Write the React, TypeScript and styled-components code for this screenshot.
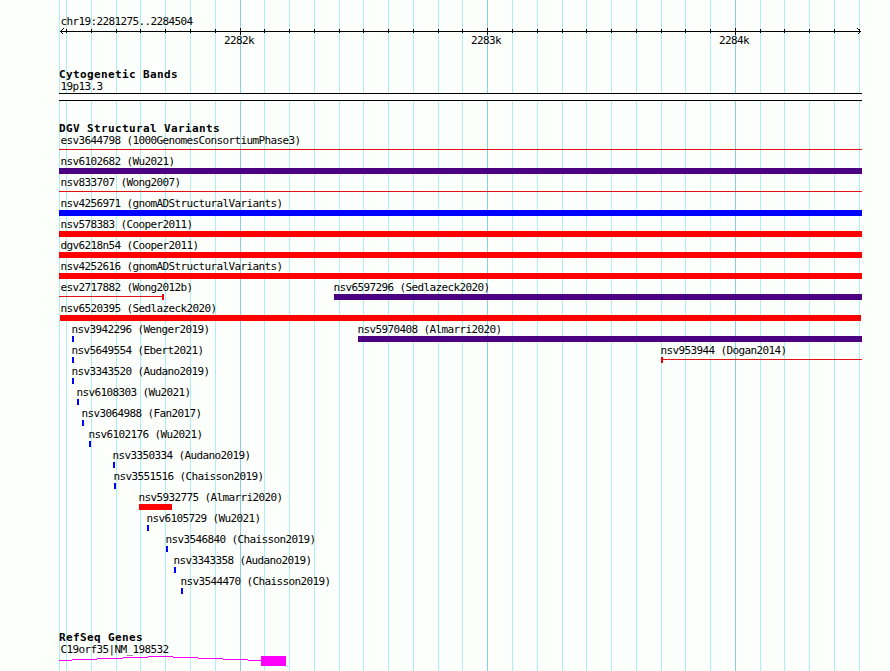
import React from 'react';
import styled, { createGlobalStyle } from 'styled-components';

const GlobalStyle = createGlobalStyle`
  body {
    margin: 0;
    background: #fdfffc;
  }
`;

// left edge of the drawn region, every position below is counted from it
const LEFT = 59;
const WIDTH = 803;

const MAJOR = [240, 487, 735];
const MINOR = [
  66, 91, 116, 140, 165, 190, 215, 264, 289, 314, 339, 363, 388, 413, 438, 462,
  512, 537, 562, 586, 611, 636, 661, 685, 710, 760, 784, 809, 834, 859,
];

const RED = '#ff0000';
const BLUE = '#0000ff';
const PURPLE = '#4b0082';

type Shape = 'bar' | 'line' | 'startCap' | 'endCap';

interface Variant {
  name: string;
  start: number;
  width: number;
  color: string;
  shape?: Shape;
  indent?: number;
}

const ROWS: Variant[][] = [
  [{ name: 'esv3644798 (1000GenomesConsortiumPhase3)', start: 0, width: 803, color: RED, shape: 'line' }],
  [{ name: 'nsv6102682 (Wu2021)', start: 0, width: 803, color: PURPLE }],
  [{ name: 'nsv833707 (Wong2007)', start: 0, width: 803, color: RED, shape: 'line' }],
  [{ name: 'nsv4256971 (gnomADStructuralVariants)', start: 0, width: 803, color: BLUE }],
  [{ name: 'nsv578383 (Cooper2011)', start: 0, width: 803, color: RED }],
  [{ name: 'dgv6218n54 (Cooper2011)', start: 0, width: 803, color: RED }],
  [{ name: 'nsv4252616 (gnomADStructuralVariants)', start: 0, width: 803, color: RED }],
  [
    { name: 'esv2717882 (Wong2012b)', start: 0, width: 105, color: RED, shape: 'endCap' },
    { name: 'nsv6597296 (Sedlazeck2020)', start: 275, width: 528, color: PURPLE, indent: -0.5 },
  ],
  [{ name: 'nsv6520395 (Sedlazeck2020)', start: 1, width: 801, color: RED, indent: 0.4 }],
  [
    { name: 'nsv3942296 (Wenger2019)', start: 13, width: 2, color: BLUE, indent: -0.5 },
    { name: 'nsv5970408 (Almarri2020)', start: 299, width: 504, color: PURPLE, indent: -0.5 },
  ],
  [
    { name: 'nsv5649554 (Ebert2021)', start: 13, width: 2, color: BLUE, indent: -0.5 },
    { name: 'nsv953944 (Dogan2014)', start: 602, width: 201, color: RED, shape: 'startCap', indent: -0.5 },
  ],
  [{ name: 'nsv3343520 (Audano2019)', start: 13, width: 2, color: BLUE, indent: -0.5 }],
  [{ name: 'nsv6108303 (Wu2021)', start: 18, width: 2, color: BLUE, indent: -0.5 }],
  [{ name: 'nsv3064988 (Fan2017)', start: 23, width: 2, color: BLUE, indent: -0.5 }],
  [{ name: 'nsv6102176 (Wu2021)', start: 30, width: 2, color: BLUE, indent: -0.5 }],
  [{ name: 'nsv3350334 (Audano2019)', start: 54, width: 2, color: BLUE, indent: -0.5 }],
  [{ name: 'nsv3551516 (Chaisson2019)', start: 55, width: 2, color: BLUE, indent: -0.5 }],
  [{ name: 'nsv5932775 (Almarri2020)', start: 80, width: 33, color: RED, indent: -0.5 }],
  [{ name: 'nsv6105729 (Wu2021)', start: 88, width: 2, color: BLUE, indent: -0.5 }],
  [{ name: 'nsv3546840 (Chaisson2019)', start: 107, width: 2, color: BLUE, indent: -0.5 }],
  [{ name: 'nsv3343358 (Audano2019)', start: 115, width: 2, color: BLUE, indent: -0.5 }],
  [{ name: 'nsv3544470 (Chaisson2019)', start: 122, width: 2, color: BLUE, indent: -0.5 }],
];

const Page = styled.div`
  position: relative;
  width: 890px;
  height: 671px;
  overflow: hidden;
  background: #fdfffc;
  color: #000;
  font-family: 'DejaVu Sans Mono', monospace;
  font-size: 11px;
  line-height: 13px;
  letter-spacing: -0.622px;
  white-space: pre;
`;

const Grid = styled.svg`
  position: absolute;
  top: 0;
  left: 0;
`;

const Tracks = styled.main`
  position: relative;
  display: flex;
  flex-direction: column;
  width: ${WIDTH}px;
  margin-left: ${LEFT}px;
`;

const Track = styled.section<{ $height?: number }>`
  ${({ $height }) => $height && `height: ${$height}px;`}
`;

const Title = styled.h2`
  margin: 0;
  height: 12px;
  font-size: 11px;
  font-weight: bold;
  letter-spacing: 0.378px;
`;

const Label = styled.div<{ $indent?: number }>`
  height: 13px;
  margin-left: ${({ $indent = 1.4 }) => $indent}px;
`;

const RulerTrack = styled.section`
  height: 53px;
  padding-top: 15px;
`;

const Axis = styled.svg`
  display: block;
  margin-top: -2px;
`;

const AxisLabels = styled.div`
  display: grid;
  grid-template-columns: 247px 248px 30px;
  padding-left: 165px;
  margin-top: -2px;
`;

const Band = styled.div`
  height: 6px;
  border-top: 1px solid #000;
  border-bottom: 1px solid #000;
  background: #fff;
`;

const VariantRow = styled.div`
  display: grid;
  height: 21px;
`;

const Feature = styled.div<{ $start: number }>`
  grid-area: 1 / 1;
  padding-left: ${({ $start }) => $start}px;
`;

const Glyph = styled.div<{ $color: string; $width: number; $shape: Shape }>`
  display: flex;
  align-items: center;
  justify-content: ${({ $shape }) => ($shape === 'endCap' ? 'flex-end' : 'flex-start')};
  width: ${({ $width }) => $width}px;
  height: 6px;
  background: ${({ $color, $shape }) =>
    $shape === 'bar'
      ? $color
      : `linear-gradient(#e31010, #e31010) 0 2px / 100% 1px no-repeat`};
`;

const Cap = styled.span`
  width: 2px;
  height: 6px;
  background: ${RED};
`;

const Gene = styled.svg`
  display: block;
`;

const FeatureItem = ({ name, start, width, color, shape = 'bar', indent }: Variant) => (
  <Feature $start={start}>
    <Label $indent={indent}>{name}</Label>
    <Glyph $color={color} $width={width} $shape={shape}>
      {(shape === 'startCap' || shape === 'endCap') && <Cap />}
    </Glyph>
  </Feature>
);

const App = () => (
  <>
    <GlobalStyle />
    <Page>
      <Grid width="890" height="671" shapeRendering="crispEdges">
        {[LEFT, ...MINOR].map((x) => (
          <rect key={x} x={x} y="0" width="1" height="671" fill="#afeeee" />
        ))}
        {MAJOR.map((x) => (
          <rect key={x} x={x} y="0" width="1" height="671" fill="#87ceeb" />
        ))}
      </Grid>
      <Tracks>
        <RulerTrack>
          <Label>chr19:2281275..2284504</Label>
          <Axis width={WIDTH} height="10" shapeRendering="crispEdges">
            <rect x="1" y="5" width="801" height="1" />
            {MINOR.map((x) => (
              <rect key={x} x={x - LEFT} y="3" width="1" height="4" />
            ))}
            {MAJOR.map((x) => (
              <rect key={x} x={x - LEFT} y="2" width="1" height="7" />
            ))}
            <path d="M4.5 2.5L1.5 5.5L4.5 8.5M798.5 2.5L801.5 5.5L798.5 8.5" fill="none" stroke="#000" />
          </Axis>
          <AxisLabels>
            <span>2282k</span>
            <span>2283k</span>
            <span>2284k</span>
          </AxisLabels>
        </RulerTrack>
        <Track $height={54}>
          <Title>Cytogenetic Bands</Title>
          <Label>19p13.3</Label>
          <Band />
        </Track>
        <Track $height={509}>
          <Title>DGV Structural Variants</Title>
          <div>
            {ROWS.map((row) => (
              <VariantRow key={row[0].name}>
                {row.map((variant) => (
                  <FeatureItem key={variant.name} {...variant} />
                ))}
              </VariantRow>
            ))}
          </div>
        </Track>
        <Track>
          <Title>RefSeq Genes</Title>
          <Label>C19orf35|NM_198532</Label>
          <Gene width={WIDTH} height="16" shapeRendering="crispEdges">
            <path
              d="M0 4.5H13M13 3.5H38M38 2.5H64M64 1.5H89M89 0.5H114M114 1.5H139M139 2.5H164M164 3.5H189M189 4.5H202"
              fill="none"
              stroke="#ff00ff"
            />
            <rect x="202" y="0" width="25" height="10" fill="#ff00ff" />
          </Gene>
        </Track>
      </Tracks>
    </Page>
  </>
);

export default App;
